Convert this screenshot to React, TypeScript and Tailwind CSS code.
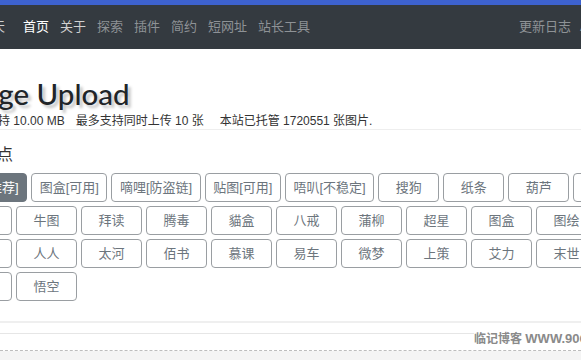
const FONT = "font-['Liberation_Sans','Noto_Sans_CJK_SC',sans-serif]";

const navLinks = [
  { label: "首页", tone: "text-white" },
  { label: "关于", tone: "text-[#d0d0d0]" },
  { label: "探索", tone: "text-[#8e9296]" },
  { label: "插件", tone: "text-[#8e9296]" },
  { label: "简约", tone: "text-[#8e9296]" },
  { label: "短网址", tone: "text-[#8e9296]" },
  { label: "站长工具", tone: "text-[#8e9296]" },
];

// each row of upload nodes; the page is scrolled sideways so the first one is cut off
const rows: string[][] = [
  ["新浪[推荐]", "图盒[可用]", "嘀哩[防盗链]", "贴图[可用]", "唔叭[不稳定]", "搜狗", "纸条", "葫芦", "百度"],
  ["京东", "牛图", "拜读", "腾毒", "貓盒", "八戒", "蒲柳", "超星", "图盒", "图绘"],
  ["网易", "人人", "太河", "佰书", "慕课", "易车", "微梦", "上策", "艾力", "末世"],
  ["阿里", "悟空"],
];

function NodeButton({ label, active }: { label: string; active?: boolean }) {
  return (
    <button
      className={
        "h-[29px] min-w-[61px] shrink-0 rounded-[4px] border px-[7.5px] text-[13px] leading-none whitespace-nowrap " +
        (active
          ? "border-[#6c757d] bg-[#6c757d] text-white"
          : "border-[#9a9ea2] bg-white text-[#6c757d]")
      }
    >
      {label}
    </button>
  );
}

export default function App() {
  return (
    <div className={`relative h-[360px] w-[581px] overflow-hidden bg-white ${FONT}`}>
      <div className="h-[5px] bg-[#3d62cf]" />

      <nav className="flex h-[44px] items-center bg-[#343a40] text-[13px]">
        <div className="ml-[-8px] flex items-center gap-[11px]">
          <span className="mr-[7px] text-[#d0d0d0]">天</span>
          {navLinks.map((l) => (
            <span key={l.label} className={l.tone}>
              {l.label}
            </span>
          ))}
        </div>
        <div className="ml-auto mr-[-20px] flex items-center gap-[9px] text-[#8e9296]">
          <span>更新日志</span>
          <span>API</span>
        </div>
      </nav>

      <header className="pt-[27px]">
        <h1 className="ml-[-49px] font-['Lato','Noto_Sans_CJK_SC',sans-serif] text-[29.5px] font-medium leading-[36px] whitespace-nowrap text-[#212529] [text-shadow:3px_3px_3px_#c4c4c4]">
          Image Upload
        </h1>
        <p className="ml-[-38px] mt-[1px] text-[12px] leading-[16px] whitespace-nowrap text-[#333]">
          最大支持 10.00 MB<span className="ml-[11px]">最多支持同时上传 10 张</span>
          <span className="ml-[16px]">本站已托管 1720551 张图片.</span>
        </p>
      </header>

      <div className="border-t border-[#eeeeee]" />

      <section className="pt-[15px]">
        <h2 className="ml-[-51px] text-[16px] leading-[20px] whitespace-nowrap text-[#333]">选择节点</h2>
        <div className="ml-[-49px] mt-[8px] flex flex-col gap-[4px]">
          {rows.map((row, i) => (
            <div key={i} className="flex gap-[4px]">
              {row.map((label, j) => (
                <NodeButton key={label + j} label={label} active={i === 0 && j === 0} />
              ))}
            </div>
          ))}
        </div>
      </section>

      <footer className="mt-[20px]">
        <div className="border-t-2 border-[#efefef]" />
        <div className="relative mt-[10px] h-[17px] border-t border-[#e6e6e6]">
          <span className="absolute left-[474px] top-[-2px] bg-white text-[12px] font-bold leading-[14px] whitespace-nowrap text-[#8a8a8a]">
            临记博客 <span className="text-[13px]">WWW.90QH.CN</span>
          </span>
        </div>
        <div className="border-t border-dashed border-[#bdbdbd]" />
        <div className="h-[20px] bg-[#f4f4f4]" />
      </footer>
    </div>
  );
}
